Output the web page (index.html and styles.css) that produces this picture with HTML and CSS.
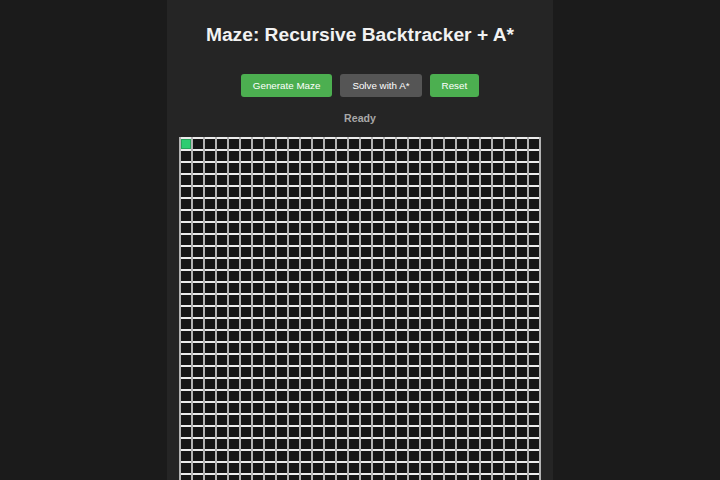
FILE: index.html
```html
<!DOCTYPE html>
<html lang="en">
<head>
<meta charset="utf-8">
<title>Maze: Recursive Backtracker + A*</title>
<link rel="stylesheet" href="styles.css">
</head>
<body>
<main class="card">
  <h1 class="title">Maze: Recursive Backtracker + A*</h1>
  <div class="controls">
    <button class="btn btn-green">Generate Maze</button>
    <button class="btn btn-gray">Solve with A*</button>
    <button class="btn btn-green">Reset</button>
  </div>
  <div class="status">Ready</div>
  <div class="maze">
    <div class="start-cell"></div>
  </div>
</main>
</body>
</html>
```
FILE: styles.css
```css
html, body {
  margin: 0;
  padding: 0;
  background: #1b1b1b;
  height: 100%;
  overflow: hidden;
}
body {
  font-family: "Liberation Sans", Arial, sans-serif;
  color: #eee;
}
.card {
  width: 362px;
  margin: 0 auto;
  padding: 0 12px;
  background: #252525;
  min-height: 100%;
  display: flex;
  flex-direction: column;
  align-items: center;
}
.title {
  margin: 24px 0 0;
  font-size: 19.2px;
  line-height: 22px;
  font-weight: bold;
  color: #f2f2f2;
}
.controls {
  margin-top: 28px;
  display: flex;
  gap: 8px;
}
.btn {
  font-family: "Liberation Sans", Arial, sans-serif;
  font-size: 9.8px;
  line-height: 11px;
  padding: 6px 12px;
  border: none;
  border-radius: 3px;
  color: #fff;
}
.btn-green { background: #4caf50; }
.btn-gray { background: #555555; }
.status {
  margin-top: 15px;
  font-size: 10.6px;
  line-height: 12px;
  font-weight: bold;
  color: #a8a8a8;
}
.maze {
  position: relative;
  margin-top: 13px;
  width: 362px;
  height: 362px;
  background-color: #161616;
  background-image:
    linear-gradient(to right, #b4b4b4 2px, transparent 2px),
    linear-gradient(to bottom, #ececec 2px, transparent 2px);
  background-size: 12px 12px;
  flex-shrink: 0;
}
.start-cell {
  position: absolute;
  left: 2px;
  top: 2px;
  width: 8px;
  height: 8px;
  background: #2ecc71;
  border: 1px solid #27a35b;
  box-sizing: content-box;
}
```
